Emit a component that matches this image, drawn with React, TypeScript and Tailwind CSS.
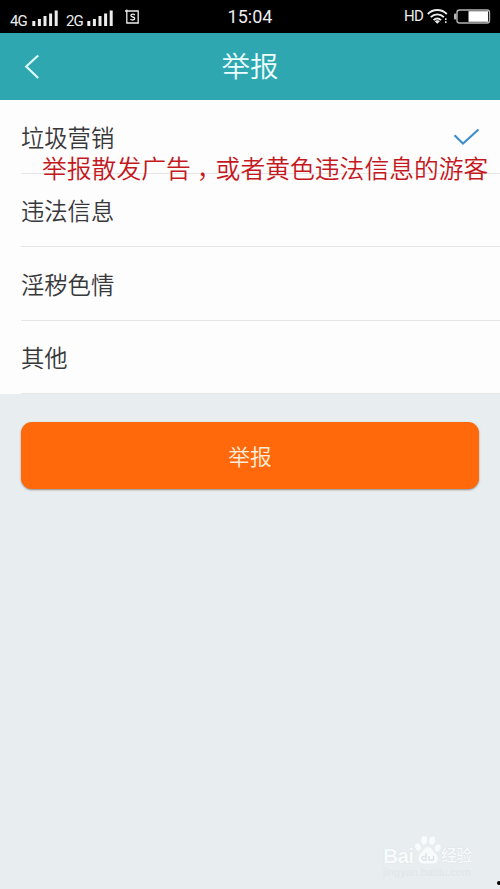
import { useState } from "react";

const reasons = [
  { label: "垃圾营销", height: "h-[74px]" },
  { label: "违法信息", height: "h-[73px]" },
  { label: "淫秽色情", height: "h-[74px]" },
  { label: "其他", height: "h-[73px]" },
];

function SignalBars() {
  return (
    <svg width="27" height="17" viewBox="0 0 27 17" fill="#ededed">
      <rect x="0.3" y="11" width="3" height="5" />
      <rect x="5.9" y="9" width="3" height="7" />
      <rect x="11.5" y="6" width="3" height="10" />
      <rect x="17.1" y="3.5" width="3" height="12.5" />
      <rect x="22.7" y="0.5" width="3" height="15.5" />
    </svg>
  );
}

function StatusBar() {
  return (
    <div className="relative flex h-[33px] items-start justify-between bg-black pl-[10px] pr-[9px] font-['Roboto',sans-serif] text-[#ededed]">
      <div className="flex">
        <span className="mt-[12px] w-[22px] text-[15px] leading-[18px] tracking-[-1px]">4G</span>
        <div className="mt-[10px]">
          <SignalBars />
        </div>
        <span className="ml-[7px] mt-[12px] w-[21px] text-[15px] leading-[18px] tracking-[-1px]">2G</span>
        <div className="mt-[10px]">
          <SignalBars />
        </div>
        <svg className="ml-[11px] mt-[9px]" width="15" height="16" viewBox="0 0 15 16" fill="none" stroke="#ededed">
          <path d="M0 2H13.2V14H1.8V0.5" strokeWidth="1.3" />
          <path d="M9.8 6.2Q9.2 5.2 7.7 5.2Q5.9 5.2 5.9 6.6Q5.9 7.7 7.7 8Q9.7 8.4 9.7 9.6Q9.7 11 7.7 11Q6 11 5.5 9.9" strokeWidth="1.3" />
        </svg>
      </div>
      <span className="absolute inset-x-0 top-[7px] text-center text-[18px] leading-[20px]">15:04</span>
      <div className="flex">
        <span className="mt-[7px] w-[23px] text-[15px] leading-[18px] tracking-[-0.8px]">HD</span>
        <svg className="mt-[8px]" width="23" height="17" viewBox="0 0 23 17" fill="none" stroke="#ededed" strokeWidth="1.9">
          <path d="M0.8 6C6 0.6 14.6 0.6 19.8 6" />
          <path d="M3.7 9.2C7.4 5.4 13.2 5.4 16.9 9.2" />
          <path d="M6.6 12.1C8.8 9.9 11.8 9.9 14 12.1" />
          <path d="M7.7 13.2C9.2 11.8 11.4 11.8 12.9 13.2L10.3 15.8Z" fill="#ededed" stroke="none" />
          <path d="M18.8 10.2V12M18.8 13.2V15" strokeWidth="1.5" />
        </svg>
        <svg className="ml-[4px] mt-[8px]" width="37" height="17" viewBox="0 0 37 17">
          <rect x="3" y="2" width="32.5" height="13" rx="2.5" fill="none" stroke="#b5b5b5" strokeWidth="1.4" />
          <rect x="0" y="5.5" width="2.5" height="6" rx="1" fill="#b5b5b5" />
          <rect x="14.5" y="3.2" width="19.5" height="10.6" fill="#fff" />
        </svg>
      </div>
    </div>
  );
}

function Header() {
  return (
    <header className="relative flex h-[67px] items-center justify-center bg-[#2ea7b0] text-[#ecfeff]">
      <button aria-label="返回" className="absolute left-[24px] top-[21px]">
        <svg width="16" height="26" viewBox="0 0 16 26" fill="none" stroke="#dcfbfc" strokeWidth="2.2">
          <path d="M14.2 1.5L2.2 12.5L14.2 24" />
        </svg>
      </button>
      <h1 className="pb-[3px] text-[28.5px] font-[350] leading-[40px]">举报</h1>
    </header>
  );
}

function Watermark() {
  return (
    <div className="absolute left-[383px] top-[835px] h-[46px] w-[94px] text-[#f8fbfc]">
      <svg className="absolute left-[31px] top-0" width="28" height="30" viewBox="0 0 28 30" fill="#f8fbfc">
        <ellipse cx="4" cy="12" rx="2.8" ry="3.8" transform="rotate(-18 4 12)" />
        <ellipse cx="10.2" cy="5.2" rx="2.9" ry="4.2" />
        <ellipse cx="18.2" cy="5.6" rx="2.9" ry="4.2" transform="rotate(12 18.2 5.6)" />
        <ellipse cx="23.6" cy="13" rx="2.8" ry="3.6" transform="rotate(18 23.6 13)" />
        <path d="M14 12C10.5 12 9.5 16 6.5 18.5C3.5 21 3.8 28 9 28.5H19.5C24.5 28 24.8 21.5 21.5 18.5C18.5 16 17.5 12 14 12Z" />
        <path d="M12 18V25H9.5Q8 25 8 23.3Q8 21.5 9.7 21.5H12M15 21V25H19.5V21" fill="none" stroke="#dce3e6" strokeWidth="1.5" />
      </svg>
      <span className="absolute left-0 top-[9px] font-['Liberation_Sans',sans-serif] text-[21px] font-bold leading-[24px] tracking-[-0.8px] [text-shadow:0_0_1px_#c9d1d5]">Bai</span>
      <span className="absolute left-[58px] top-[8px] whitespace-nowrap text-[16px] font-medium leading-[22px] tracking-[-0.8px] [text-shadow:0_0_1px_#c9d1d5]">经验</span>
      <span className="absolute left-0 top-[31px] font-['Liberation_Sans',sans-serif] text-[10.5px] leading-[12px] tracking-[0.2px] text-[#dfe6e9]">jingyan.baidu.com</span>
    </div>
  );
}

export default function App() {
  const [selected, setSelected] = useState(0);

  return (
    <div className="relative h-[889px] w-[500px] overflow-hidden bg-[#e8edef] font-['Noto_Sans_CJK_SC',sans-serif]">
      <StatusBar />
      <Header />
      <main>
        <ul className="bg-[#fdfdfd] pl-[21px]">
          {reasons.map((reason, i) => (
            <li
              key={reason.label}
              onClick={() => setSelected(i)}
              className={`flex items-center justify-between border-b border-[#e5e7e7] pr-[20px] ${reason.height}`}
            >
              <span className="text-[23.3px] font-[350] leading-[34px] text-[#38383b]">{reason.label}</span>
              {selected === i && (
                <svg width="27" height="18" viewBox="0 0 27 18" fill="none" stroke="#3f8fcb" strokeWidth="2.2">
                  <path d="M1.5 7.2L10 15.5L25.5 1.5" />
                </svg>
              )}
            </li>
          ))}
        </ul>
        <div className="px-[21px] pt-[28px]">
          <button className="h-[67px] w-full rounded-[11px] bg-[#ff690b] pt-[2px] text-[21.8px] font-[350] text-[#ffeedb] shadow-[0_1px_2px_rgba(90,70,60,0.6)]">
            举报
          </button>
        </div>
      </main>
      {/* red note laid over the first divider */}
      <p className="absolute left-[42px] top-[149px] whitespace-nowrap text-[24.8px] font-[350] leading-[36px] text-[#c5181d]">
        举报散发广告<span className="-mr-[6px] pl-[6px]">，</span>或者黄色违法信息的游客
      </p>
      <Watermark />
      <span className="absolute left-[497px] top-[881px] h-[4px] w-[4px] rounded-full bg-black" />
    </div>
  );
}
